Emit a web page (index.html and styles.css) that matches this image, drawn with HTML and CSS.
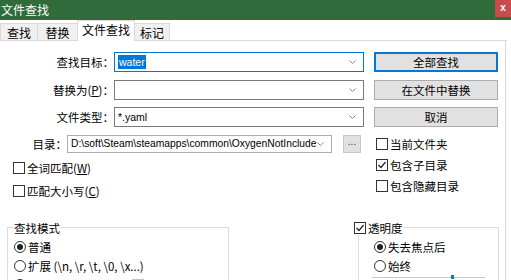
FILE: index.html
```html
<!DOCTYPE html>
<html lang="zh-CN">
<head>
    <meta charset="UTF-8">
    <meta name="viewport" content="width=device-width, initial-scale=1.0">
    <title>文件查找</title>
    <link rel="stylesheet" href="styles.css">
</head>
<body>
    <div class="titlebar">
        <span class="title">文件查找</span>
        <span class="close">x</span>
    </div>
    <div class="tabs">
        <div class="tab">查找</div>
        <div class="tab">替换</div>
        <div class="tab active">文件查找</div>
        <div class="tab">标记</div>
    </div>
    <div class="panel">
        <div class="form">
            <label class="lbl">查找目标：</label>
            <div class="combo focus">
                <span class="sel">water</span>
                <svg class="arrow" width="7" height="4" viewBox="0 0 7 4"><polyline points="0.5,0.5 3.5,3.5 6.5,0.5" fill="none" stroke="#888" stroke-width="1"/></svg>
            </div>
            <button class="btn default">全部查找</button>

            <label class="lbl">替换为(<u>P</u>)：</label>
            <div class="combo">
                <span></span>
                <svg class="arrow" width="7" height="4" viewBox="0 0 7 4"><polyline points="0.5,0.5 3.5,3.5 6.5,0.5" fill="none" stroke="#888" stroke-width="1"/></svg>
            </div>
            <button class="btn">在文件中替换</button>

            <label class="lbl">文件类型：</label>
            <div class="combo">
                <span>*.yaml</span>
                <svg class="arrow" width="7" height="4" viewBox="0 0 7 4"><polyline points="0.5,0.5 3.5,3.5 6.5,0.5" fill="none" stroke="#888" stroke-width="1"/></svg>
            </div>
            <button class="btn">取消</button>
        </div>

        <div class="lower">
            <div class="left">
                <div class="dir-row">
                    <label class="dir-lbl">目录：</label>
                    <div class="combo dir">
                        <span class="path">D:\soft\Steam\steamapps\common\OxygenNotInclude</span>
                        <svg class="arrow" width="7" height="4" viewBox="0 0 7 4"><polyline points="0.5,0.5 3.5,3.5 6.5,0.5" fill="none" stroke="#888" stroke-width="1"/></svg>
                    </div>
                    <button class="dots">...</button>
                </div>
                <div class="checks left-checks">
                    <div class="check"><span class="box"></span>全词匹配(<u>W</u>)</div>
                    <div class="check"><span class="box"></span>匹配大小写(<u>C</u>)</div>
                </div>
            </div>
            <div class="checks right-checks">
                <div class="check"><span class="box"></span>当前文件夹</div>
                <div class="check"><span class="box on"><svg width="10" height="10" viewBox="0 0 10 10"><polyline points="1.5,5 4,7.5 8.5,2" fill="none" stroke="#222" stroke-width="1.2"/></svg></span>包含子目录</div>
                <div class="check"><span class="box"></span>包含隐藏目录</div>
            </div>
        </div>

        <div class="groups">
            <fieldset class="group mode">
                <legend>查找模式</legend>
                <div class="radio"><span class="dot on"></span>普通</div>
                <div class="radio"><span class="dot"></span>扩展 (\n, \r, \t, \0, \x...)</div>
                <div class="radio"><span class="dot"></span>正则表达式(<u>E</u>)<span class="check disabled newline"><span class="box"></span>. 匹配新行</span></div>
            </fieldset>
            <fieldset class="group trans">
                <legend><span class="check"><span class="box on"><svg width="10" height="10" viewBox="0 0 10 10"><polyline points="1.5,5 4,7.5 8.5,2" fill="none" stroke="#222" stroke-width="1.2"/></svg></span>透明度</span></legend>
                <div class="radio"><span class="dot on"></span>失去焦点后</div>
                <div class="radio"><span class="dot"></span>始终</div>
                <div class="slider"><span class="thumb"></span></div>
            </fieldset>
        </div>
    </div>
</body>
</html>
```

FILE: styles.css
```css
html, body {
    margin: 0;
    padding: 0;
    height: 280px;
    overflow: hidden;
}
body {
    font-family: "Noto Sans CJK SC", sans-serif;
    font-size: 11.5px;
    color: #000;
    background: #fff;
}
u {
    text-decoration: underline;
    text-underline-offset: 1px;
}
.titlebar {
    height: 20px;
    background: #2f6b3b;
    display: flex;
    justify-content: space-between;
    align-items: flex-start;
}
.title {
    color: #fff;
    font-size: 12px;
    line-height: 20px;
    padding-left: 1px;
}
.close {
    width: 16px;
    height: 17px;
    background: #c94b4e;
    color: #fff;
    font-family: "Liberation Sans", sans-serif;
    font-size: 10px;
    font-weight: bold;
    text-align: center;
    line-height: 16px;
}
.tabs {
    height: 20px;
    display: flex;
    align-items: flex-end;
    width: 507px;
    border-bottom: 1px solid #d9d9d9;
}
.tab {
    height: 17px;
    line-height: 17px;
    background: #f0f0f0;
    border: 1px solid #d9d9d9;
    border-bottom: none;
    margin-right: -1px;
    text-align: center;
    font-size: 12px;
    box-sizing: border-box;
    flex: none;
}
.tab:nth-child(1) { width: 38px; }
.tab:nth-child(2) { width: 41px; }
.tab:nth-child(3) { width: 58px; }
.tab:nth-child(4) { width: 36px; }
.tab.active {
    height: 21px;
    line-height: 18px;
    background: #fff;
    margin-bottom: -1px;
    position: relative;
}
.panel {
    width: 506px;
    height: 240px;
    border-right: 1px solid #d9d9d9;
    padding-top: 11px;
    box-sizing: border-box;
}
.form {
    display: grid;
    grid-template-columns: 114px 250px 134px;
    grid-auto-rows: 20px;
    row-gap: 7.5px;
    align-items: center;
}
.lbl {
    text-align: right;
    line-height: 20px;
}
.combo {
    height: 20px;
    border: 1px solid #7a7a7a;
    box-sizing: border-box;
    display: flex;
    align-items: center;
    justify-content: space-between;
    padding: 0 7px 0 3px;
    font-family: "Liberation Sans", sans-serif;
    font-size: 10.5px;
    background: #fff;
    overflow: hidden;
    white-space: nowrap;
}
.combo.focus {
    border-color: #0078d7;
}
.sel {
    background: #0078d7;
    color: #fff;
    padding: 0 1px;
    line-height: 14px;
}
.arrow {
    flex: none;
}
.btn {
    height: 20px;
    margin: 0 0 0 10px;
    padding: 0;
    background: #e1e1e1;
    border: 1px solid #adadad;
    font-family: inherit;
    font-size: 11.5px;
    color: #000;
}
.btn.default {
    border: 2px solid #0078d7;
}
.lower {
    display: flex;
    margin-top: 7.5px;
}
.left {
    width: 376px;
    flex: none;
}
.dir-row {
    display: flex;
    align-items: center;
    height: 18px;
}
.dir-lbl {
    width: 67px;
    flex: none;
    text-align: right;
}
.combo.dir {
    width: 265px;
    flex: none;
    height: 18px;
    border-color: #adadad;
    padding-left: 3px;
}
.path {
    font-size: 10.3px;
}
.dots {
    width: 18px;
    height: 18px;
    flex: none;
    margin: 0 0 0 11px;
    padding: 0 0 4px;
    background: #e1e1e1;
    border: 1px solid #c8c8c8;
    font-family: "Liberation Sans", sans-serif;
    font-size: 10px;
    line-height: 10px;
    color: #333;
}
.checks {
    display: flex;
    flex-direction: column;
}
.left-checks {
    padding-left: 13px;
    margin-top: 8px;
    gap: 9px;
}
.right-checks {
    padding-top: 2.5px;
    gap: 7px;
}
.check {
    display: flex;
    align-items: center;
    height: 14px;
    white-space: nowrap;
}
.box {
    width: 12px;
    height: 12px;
    border: 1px solid #333;
    box-sizing: border-box;
    margin-right: 2px;
    display: flex;
    align-items: center;
    justify-content: center;
    background: #fff;
    flex: none;
}
.box svg {
    flex: none;
}
.groups {
    display: flex;
    margin-top: 23px;
}
.group {
    margin: 0;
    border: 1px solid #dcdcdc;
    height: 80px;
    box-sizing: border-box;
    padding: 5px 0 0 6px;
    flex: none;
}
.group legend {
    padding: 0;
    line-height: 14px;
    height: 14px;
}
.mode {
    margin-left: 7px;
    width: 222px;
}
.mode legend {
    padding-right: 1px;
}
.trans {
    margin-left: 129px;
    width: 141px;
    padding-left: 15px;
}
.trans legend {
    margin-left: -20px;
    background: #fff;
}
.radio {
    display: flex;
    align-items: center;
    height: 14px;
    margin-bottom: 5px;
    white-space: nowrap;
}
.dot {
    width: 12px;
    height: 12px;
    border: 1px solid #333;
    border-radius: 50%;
    box-sizing: border-box;
    margin-right: 2px;
    display: flex;
    align-items: center;
    justify-content: center;
    flex: none;
}
.dot.on::after {
    content: "";
    width: 6px;
    height: 6px;
    border-radius: 50%;
    background: #222;
}
.newline {
    margin-left: 32px;
    color: #a0a0a0;
}
.newline .box {
    border-color: #c0c0c0;
    margin-right: 10px;
}
.slider {
    margin: -1px 0 0 -2px;
    width: 113px;
    height: 1px;
    background: #c8c8c8;
    position: relative;
}
.thumb {
    position: absolute;
    left: 79px;
    top: -2px;
    width: 3px;
    height: 4px;
    background: #0078d7;
}
```
